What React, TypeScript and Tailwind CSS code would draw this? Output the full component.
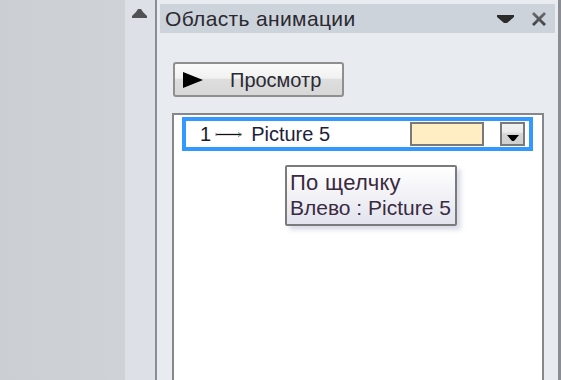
import React from "react";

export default function App() {
  const font = { fontFamily: '"Liberation Sans", Arial, sans-serif' };
  return (
    <div className="flex w-[561px] h-[380px] overflow-hidden bg-[#cdd0d4]" style={font}>
      {/* left gray area */}
      <div className="w-[125px] h-full bg-gradient-to-r from-[#cbced2] to-[#cfd2d6]" />
      {/* scroll strip */}
      <div className="w-[30px] h-full bg-[#dde0e6] flex pl-[6px] pt-[9px]">
        <svg width="17" height="10" viewBox="0 0 17 10">
          <path d="M7 0 H10 L12 3 L16 7 V9 H1 V7 L5 3 Z" fill="#505254" />
        </svg>
      </div>
      {/* panel */}
      <div className="flex-1 h-full flex flex-col bg-[#e8ebf0] border-l-2 border-r-[3px] border-[#8a8d93] px-[3px] pt-[4px]">
        {/* header */}
        <div className="h-[29px] bg-[#cdd3db] flex items-center pl-[5px] pr-[8px] shrink-0">
          <span className="text-[21px] leading-none text-[#2a2a30] tracking-[0.35px]">Область анимации</span>
          <div className="flex-1" />
          <svg width="17" height="9" viewBox="0 0 17 9" className="mr-[17px] mt-[1px]">
            <path d="M0 0 H17 V2 L10 8 H7 L0 2 Z" fill="#2b2b2b" />
          </svg>
          <svg width="16" height="16" viewBox="0 0 16 16">
            <defs>
              <linearGradient id="xg" x1="0" y1="0" x2="0" y2="1">
                <stop offset="0" stopColor="#6d6f72" />
                <stop offset="1" stopColor="#3e4043" />
              </linearGradient>
            </defs>
            <path d="M1 3 L3 1 L8 6 L13 1 L15 3 L10 8 L15 13 L13 15 L8 10 L3 15 L1 13 L6 8 Z" fill="url(#xg)" />
          </svg>
        </div>
        {/* preview button */}
        <div className="mt-[29px] ml-[13px] w-[171px] h-[35px] shrink-0 rounded-[3px] border-2 border-[#8f8f8f] bg-[linear-gradient(to_bottom,#fbfbfb_0%,#f1f1f1_45%,#dedede_50%,#d7d7d7_100%)] flex items-center pl-[8px]">
          <svg width="20" height="16" viewBox="0 0 20 16">
            <path d="M0 0 L20 8 L0 16 Z" fill="#000" />
          </svg>
          <span className="ml-[27px] text-[20px] leading-none text-[#2a2a35]">Просмотр</span>
        </div>
        {/* list box */}
        <div className="relative mt-[16px] ml-[12px] mr-[11px] flex-1 border-2 border-b-0 border-[#86878b] bg-white">
          <div className="mt-[2px] ml-[8px] mr-[9px] h-[34px] border-4 border-[#3399ff] flex items-center pl-[14px] pr-[4px]">
            <span className="text-[20px] leading-none text-[#1a1a2a]">1</span>
            <svg width="28" height="7" viewBox="0 0 28 7" className="ml-[4px] mt-[1px]">
              <line x1="1" y1="3.5" x2="26" y2="3.5" stroke="#111" strokeWidth="1.3" />
              <line x1="1" y1="2" x2="1" y2="5" stroke="#a07070" strokeWidth="1" />
              <path d="M23 1.5 L27 3.5 L23 5.5" stroke="#5a8a7a" strokeWidth="1" fill="none" />
            </svg>
            <span className="ml-[8px] text-[20px] leading-none text-[#1e1e3a]">Picture 5</span>
            <div className="flex-1" />
            <div className="w-[74px] h-[24px] border-2 border-[#7a7a7a] bg-[#ffedc4]" />
            <div className="ml-[16px] w-[25px] h-[24px] border-2 border-[#7a7a7a] bg-[linear-gradient(to_bottom,#f2f2f2_0%,#ececec_40%,#d6d6d6_50%,#d0d0d0_100%)] flex items-end justify-center pb-[3px]">
              <svg width="12" height="6" viewBox="0 0 12 6">
                <path d="M0 0 H12 L7 6 H5 Z" fill="#000" />
              </svg>
            </div>
          </div>
          {/* tooltip */}
          <div className="absolute left-[111px] top-[50px] w-[172px] h-[61px] border-2 border-[#7b7b7b] rounded-[2px] bg-gradient-to-b from-[#ffffff] to-[#e3e3ee] shadow-[4px_4px_4px_rgba(140,140,180,0.3)] pl-[3px] pt-[3px]">
            <div className="text-[22px] leading-[25px] tracking-[0.3px] text-[#3a2a40] whitespace-nowrap">По щелчку</div>
            <div className="text-[21px] leading-[25px] text-[#3a2a40] whitespace-nowrap">Влево : Picture 5</div>
          </div>
        </div>
      </div>
    </div>
  );
}
